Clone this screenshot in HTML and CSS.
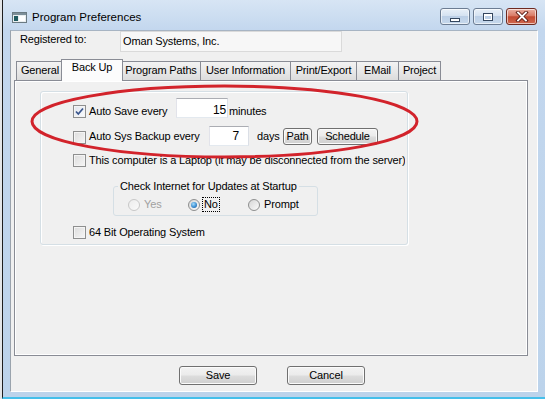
FILE: index.html
```html
<!DOCTYPE html>
<html>
<head>
<meta charset="utf-8">
<title>Program Preferences</title>
<link rel="stylesheet" href="styles.css">
</head>
<body>
<div class="window">
  <div class="titlebar">
    <svg class="app-icon" width="15" height="11" viewBox="0 0 15 11">
      <rect x="0.5" y="0.5" width="14" height="10" fill="#e9eef0" stroke="#6b7a82"/>
      <rect x="1" y="1" width="13" height="2" fill="#7d8f99"/>
      <rect x="2" y="4" width="4" height="5" fill="#1f5a60"/>
      <rect x="7" y="4" width="6" height="5" fill="#ffffff"/>
    </svg>
    <span class="title">Program Preferences</span>
    <div class="caption-btns">
      <div class="cbtn cbtn-min">
        <svg width="12" height="6" viewBox="0 0 12 6"><rect x="1.5" y="1.5" width="9" height="3" fill="#fff" stroke="#34465e"/></svg>
      </div>
      <div class="cbtn cbtn-max">
        <svg width="12" height="10" viewBox="0 0 12 10"><rect x="1.5" y="1.5" width="9" height="7" fill="none" stroke="#34465e"/><rect x="2.5" y="3.5" width="7" height="4" fill="none" stroke="#fff"/><rect x="2" y="2" width="8" height="1.5" fill="#fff"/></svg>
      </div>
      <div class="cbtn cbtn-close">
        <svg width="14" height="11" viewBox="0 0 14 11"><path d="M3 1.5 L11 9.5 M11 1.5 L3 9.5" stroke="#5a1a12" stroke-width="3.6" stroke-linecap="square"/><path d="M3 1.5 L11 9.5 M11 1.5 L3 9.5" stroke="#fff" stroke-width="1.8" stroke-linecap="square"/></svg>
      </div>
    </div>
  </div>

  <div class="client">
    <div class="reg-row">
      <span class="reg-label">Registered to:</span>
      <div class="reg-box">Oman Systems, Inc.</div>
    </div>

    <div class="tabs">
      <div class="tab t-general">General</div>
      <div class="tab tab-active t-backup">Back Up</div>
      <div class="tab t-paths">Program Paths</div>
      <div class="tab t-user">User Information</div>
      <div class="tab t-print">Print/Export</div>
      <div class="tab t-email">EMail</div>
      <div class="tab t-project">Project</div>
    </div>

    <div class="panel">
      <div class="group">
        <div class="row row-save">
          <span class="cb cb-checked"><svg width="11" height="11" viewBox="0 0 11 11"><path d="M2 5.5 L4.3 8 L9 2.5" fill="none" stroke="#3a558c" stroke-width="1.7"/></svg></span>
          <span class="lbl lbl-save">Auto Save every</span>
          <span class="tb tb-save">15</span>
          <span class="lbl lbl-min">minutes</span>
        </div>
        <div class="row row-backup">
          <span class="cb cb-low"></span>
          <span class="lbl lbl-backup">Auto Sys Backup every</span>
          <span class="tb tb-days">7</span>
          <span class="lbl lbl-days">days</span>
          <span class="btn btn-path">Path</span>
          <span class="btn btn-sched">Schedule</span>
        </div>
        <div class="row row-laptop">
          <span class="cb"></span>
          <span class="lbl lbl-laptop">This computer is a Laptop (it may be disconnected from the server)?</span>
        </div>
        <fieldset class="radio-group">
          <legend class="legend">Check Internet for Updates at Startup</legend>
          <div class="radio-row">
            <div class="ritem ritem-disabled"><span class="radio"></span><span class="rlabel">Yes</span></div>
            <div class="ritem"><span class="radio radio-on"><span class="dot"></span></span><span class="rlabel rlabel-focus">No</span></div>
            <div class="ritem"><span class="radio"></span><span class="rlabel">Prompt</span></div>
          </div>
        </fieldset>
        <div class="row row-64">
          <span class="cb"></span>
          <span class="lbl">64 Bit Operating System</span>
        </div>
      </div>
    </div>

    <div class="actions">
      <span class="btn btn-big">Save</span>
      <span class="btn btn-big">Cancel</span>
    </div>
  </div>

  <svg class="annotation" width="545" height="399" viewBox="0 0 545 399">
    <ellipse cx="224.5" cy="121.5" rx="192.5" ry="35.5" fill="none" stroke="#d2232b" stroke-width="3"/>
  </svg>
</div>
</body>
</html>
```

FILE: styles.css
```css
* { box-sizing: border-box; }

html, body {
  margin: 0;
  padding: 0;
}

body {
  width: 545px;
  height: 399px;
  overflow: hidden;
  background: #e4e6e8;
  font-family: "Liberation Sans", Arial, sans-serif;
  font-size: 11px;
  letter-spacing: -0.15px;
  color: #000;
}

.window {
  position: relative;
  margin-left: 2px;
  width: 543px;
  height: 399px;
  border-left: 1px solid #1e1e1e;
  border-bottom: 2px solid #45bfea;
  background: linear-gradient(#d7e5f4 0px, #c3d7ee 30px, #bcd3eb 100%);
}

.titlebar {
  height: 30px;
  display: flex;
  align-items: flex-start;
  padding-left: 9px;
  padding-right: 8px;
}

.app-icon {
  margin-top: 12px;
  flex: none;
}

.title {
  margin-left: 5px;
  margin-top: 10px;
  font-size: 11.5px;
  letter-spacing: 0;
  line-height: 14px;
  color: #000;
}

.caption-btns {
  margin-left: auto;
  margin-top: 8px;
  display: flex;
  gap: 3px;
}

.cbtn {
  width: 30px;
  height: 17px;
  border: 1px solid #6c7c92;
  border-radius: 3px;
  display: flex;
  align-items: center;
  justify-content: center;
  background: linear-gradient(#e9f0f8 0%, #d5e2f1 45%, #bccfe6 50%, #c6d8ec 100%);
  box-shadow: inset 0 0 0 1px rgba(255,255,255,0.6);
}

.cbtn-min svg { margin-top: 6px; }

.cbtn-close {
  width: 31px;
  border-color: #6e2a20;
  background: linear-gradient(#eab1a3 0%, #d97b66 45%, #c24a31 52%, #d0684f 100%);
}

.client {
  margin-left: 7px;
  width: 528px;
  height: 362px;
  background: #f0f0f0;
  border-left: 1px solid #9aa3ad;
  border-top: 1px solid #a7b4c3;
  border-right: 1px solid #ffffff;
  border-bottom: 1px solid #ffffff;
}

.reg-row {
  height: 21px;
  display: flex;
  align-items: flex-start;
  padding-left: 9px;
}

.reg-label {
  width: 100px;
  margin-top: 2px;
  line-height: 13px;
}

.reg-box {
  width: 222px;
  height: 21px;
  border: 1px solid #dadada;
  background: #f7f7f7;
  padding-left: 2px;
  line-height: 19px;
}

.tabs {
  margin-top: 7px;
  margin-left: 5px;
  height: 22px;
  margin-bottom: -1px;
  display: flex;
  align-items: flex-end;
  position: relative;
  z-index: 2;
}

.tab {
  height: 19px;
  margin-bottom: 1px;
  margin-right: -1px;
  border: 1px solid #898c95;
  border-bottom: none;
  background: linear-gradient(#f3f3f3, #e6e6e6 60%, #dcdcdc);
  text-align: center;
  line-height: 17px;
  white-space: nowrap;
}

.tab-active {
  height: 22px;
  margin-bottom: 0;
  margin-left: -2px;
  margin-right: -2px;
  background: #fcfcfc;
  line-height: 15px;
  position: relative;
  z-index: 3;
}

.t-general { width: 48px; }
.t-backup { width: 62px; }
.t-paths { width: 80px; }
.t-user { width: 91px; }
.t-print { width: 67px; }
.t-email { width: 43px; }
.t-project { width: 43px; }

.panel {
  margin-left: 3px;
  width: 514px;
  height: 276px;
  border: 1px solid #898c95;
  box-shadow: inset 1px 1px 0 #fff, inset -1px -1px 0 #fff;
  padding: 10px 0 0 25px;
  position: relative;
  z-index: 1;
}

.group {
  width: 368px;
  height: 154px;
  border: 1px solid #d5dfe5;
  border-radius: 3px;
  box-shadow: 1px 1px 0 #fff, inset 1px 1px 0 #fff;
  padding: 0 2px 4px 32px;
}

.row {
  display: flex;
  white-space: nowrap;
}

.row-save {
  margin-top: 6px;
  height: 20px;
  align-items: flex-end;
}

.row-backup {
  margin-top: 8px;
  height: 20px;
  align-items: center;
}

.row-laptop {
  margin-top: 8px;
  height: 13px;
  align-items: center;
  overflow: hidden;
}

.row-64 {
  margin-top: 10px;
  height: 13px;
  align-items: center;
}

.cb {
  flex: none;
  width: 13px;
  height: 13px;
  border: 1px solid #8e8f8f;
  background: linear-gradient(135deg, #dcdcdc, #f6f6f6);
  box-shadow: inset 0 0 0 1px #f4f4f4;
  display: flex;
  align-items: center;
  justify-content: center;
}

.cb-checked {
  background: linear-gradient(135deg, #e0e6ee, #fafbfd);
}

.cb-low {
  align-self: flex-end;
  margin-bottom: 2px;
}

.lbl {
  line-height: 13px;
  margin-left: 3px;
}

.lbl-save { width: 87px; }
.lbl-backup { width: 120px; }
.lbl-min { margin-left: 1px; }
.lbl-days { margin-left: 8px; width: 26px; }

.tb {
  flex: none;
  height: 20px;
  border: 1px solid #abadb3;
  border-left-color: #e2e3ea;
  border-right-color: #dbdfe6;
  border-bottom-color: #e3e9ef;
  background: #fff;
  display: flex;
  justify-content: flex-end;
  line-height: 13px;
}

.tb-save {
  width: 52px;
  align-items: flex-end;
  padding-right: 1px;
  font-size: 12px;
}

.tb-days {
  width: 40px;
  align-items: center;
  padding-right: 9px;
  font-size: 12px;
}

.btn {
  flex: none;
  display: flex;
  align-items: center;
  justify-content: center;
  border: 1px solid #707070;
  border-radius: 3px;
  background: linear-gradient(#f3f3f3 0%, #ebebeb 48%, #dddddd 52%, #cfcfcf 100%);
  box-shadow: inset 0 0 0 1px #fbfbfb;
  line-height: 13px;
}

.btn-path {
  width: 29px;
  height: 17px;
}

.btn-sched {
  width: 61px;
  height: 17px;
  margin-left: 5px;
}

.radio-group {
  margin: 13px 0 0 40px;
  width: 205px;
  border: 1px solid #d5dfe5;
  border-radius: 3px;
  padding: 4px 0 3px 14px;
  min-inline-size: 0;
}

.legend {
  padding: 0 2px;
  margin-left: -10px;
  line-height: 13px;
}

.radio-row {
  display: flex;
  height: 15px;
  align-items: center;
}

.ritem {
  width: 60px;
  display: flex;
  align-items: center;
}

.radio {
  flex: none;
  width: 12px;
  height: 12px;
  border-radius: 50%;
  border: 1px solid #8e8f8f;
  background: linear-gradient(135deg, #d6d6d6, #fbfbfb);
  display: flex;
  align-items: center;
  justify-content: center;
}

.ritem-disabled .radio {
  border-color: #c8c8c8;
  background: linear-gradient(135deg, #ececec, #fafafa);
}

.ritem-disabled .rlabel {
  color: #a0a0a0;
}

.dot {
  width: 6px;
  height: 6px;
  border-radius: 50%;
  background: radial-gradient(circle at 40% 35%, #a6dcfb 0%, #3c8fd2 55%, #1b4e8a 100%);
}

.rlabel {
  margin-left: 2px;
  padding: 0 1px;
  border: 1px dotted transparent;
  line-height: 13px;
}

.rlabel-focus {
  border-color: #000;
}

.actions {
  margin-top: 10px;
  display: flex;
  justify-content: center;
  gap: 30px;
  padding-right: 4px;
}

.btn-big {
  width: 78px;
  height: 19px;
}

.annotation {
  position: absolute;
  left: -3px;
  top: 0;
  pointer-events: none;
  z-index: 10;
}
```
